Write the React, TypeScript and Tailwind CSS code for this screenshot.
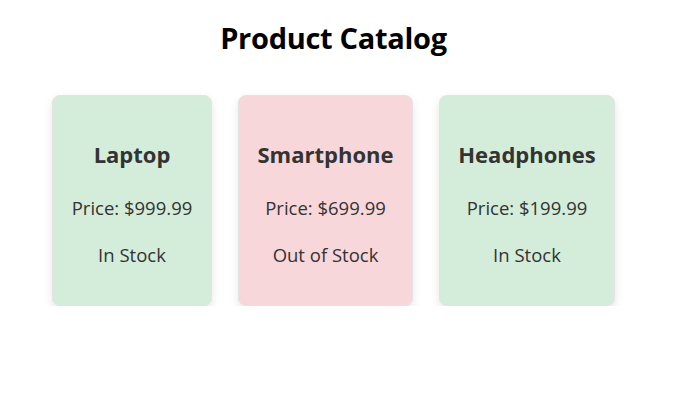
import React from 'react';

interface Product {
  name: string;
  price: string;
  inStock: boolean;
  width: string;
}

const products: Product[] = [
  { name: 'Laptop', price: '$999.99', inStock: true, width: 'w-[160px]' },
  { name: 'Smartphone', price: '$699.99', inStock: false, width: 'w-[175px]' },
  { name: 'Headphones', price: '$199.99', inStock: true, width: 'w-[176px]' },
];

const ProductCard: React.FC<{ product: Product }> = ({ product }) => {
  return (
    <div
      className={`${product.width} flex flex-col items-center rounded-lg border border-[#e3e3e3] pt-[40px] pb-[36px] text-[#333] shadow-[0_4px_10px_rgba(0,0,0,0.1)] ${
        product.inStock ? 'bg-[#d4edda]' : 'bg-[#f8d7da]'
      }`}
    >
      <h3 className="mb-[22px] text-[22px] leading-[36px] font-bold whitespace-nowrap">{product.name}</h3>
      <p className="mb-[19px] text-[18.5px] leading-[28px] whitespace-nowrap">Price: {product.price}</p>
      <p className="text-[18.5px] leading-[28px] whitespace-nowrap">{product.inStock ? 'In Stock' : 'Out of Stock'}</p>
    </div>
  );
};

export default function App() {
  return (
    <div className="w-[667px] bg-white pt-[14px] font-['Open_Sans',sans-serif]">
      <h1 className="text-center text-[29px] leading-[48px] font-bold tracking-[-0.3px] text-black">Product Catalog</h1>
      <div className="mt-[33px] flex justify-center gap-[26px]">
        {products.map((p) => (
          <ProductCard key={p.name} product={p} />
        ))}
      </div>
    </div>
  );
}
